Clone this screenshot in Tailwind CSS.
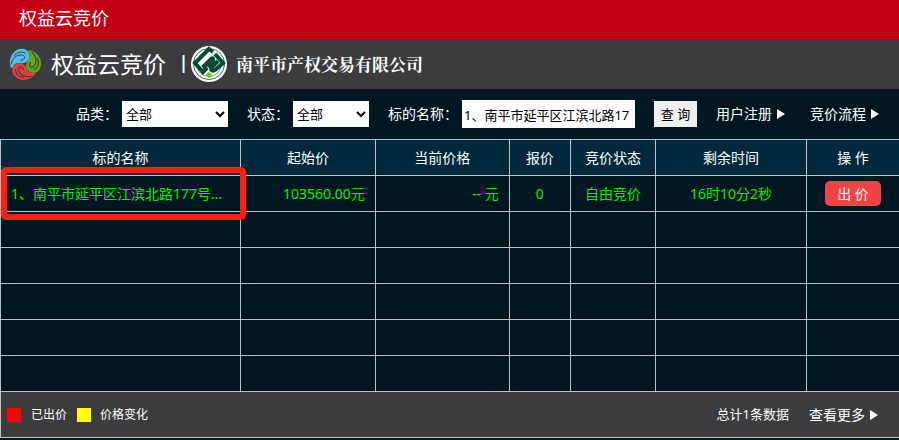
<!DOCTYPE html>
<html lang="zh-CN">
<head>
<meta charset="utf-8">
<meta name="viewport" content="width=device-width, initial-scale=1">
<title>权益云竞价</title>
<script src="https://cdn.jsdelivr.net/npm/@tailwindcss/browser@4"></script>
</head>
<body class="min-h-screen bg-[#001722] font-['Noto_Sans','Noto_Sans_CJK_SC',sans-serif] text-sm text-white">
<header>
  <div class="flex h-[39px] items-center bg-[#c40014] px-[19px] pb-[3px]">
    <h1 class="text-lg leading-6">权益云竞价</h1>
  </div>
  <div class="flex h-[50px] items-center bg-[#3c3c3e] px-[9px]">
    <svg class="size-8 shrink-0" viewBox="0 0 32 32" aria-hidden="true">
      <defs>
        <g id="petal">
          <path d="M2 20C-1 13 2 5 8 2C13-.5 18 1 20 5C22 10 19 14.500 15 15C11 16 7 14 5 17C4 19 4 20 2 20Z"/>
          <path d="M2 16C4 10 7 7 12 7C17 7 17 12 12 12M5 8C8 4 12 3 16 5" fill="none" stroke="#3c3c3e" stroke-width="1" stroke-linecap="round"/>
        </g>
      </defs>
      <use href="#petal" fill="#4fbdf0"/>
      <use href="#petal" fill="#62a51c" transform="rotate(120 16 16)"/>
      <use href="#petal" fill="#e63c40" transform="rotate(240 16 16)"/>
    </svg>
    <span class="ml-[10px] text-[23px] leading-8">权益云竞价</span>
    <span class="ml-4 h-[18px] w-[3px] border-x border-l-[#4aa5dc] border-r-[#c9a582] bg-white"></span>
    <svg class="ml-[6px] size-9 shrink-0" viewBox="0 0 36 36" aria-hidden="true">
      <circle cx="18" cy="18" r="18" fill="#fff"/>
      <circle cx="18" cy="18" r="15.500" fill="none" stroke="#41685a" stroke-width="1"/>
      <circle cx="18" cy="18" r="12.500" fill="none" stroke="#71877d" stroke-width="1"/>
      <path d="M18 1L34 17L22 28L13 29L2 18Z" fill="#fff"/>
      <path d="M22 6L18 3L4 17L12 26L15 23L13 20L20 13Q23 11 22 15L17 21" fill="none" stroke="#064b36" stroke-width="4"/>
      <path d="M24 8L32 17L24 24Q20 26 20 22L27 15" fill="none" stroke="#064b36" stroke-width="4"/>
      <path d="M18 27L20 29L18 31L16 29Z" fill="#83c31f" stroke="#83c31f" stroke-width="2"/>
    </svg>
    <span class="ml-[9px] font-['Noto_Serif_CJK_SC','Noto_Sans_CJK_SC',serif] text-[17px] leading-6 font-bold">南平市产权交易有限公司</span>
  </div>
</header>
<main>
  <form class="flex h-[50px] items-center justify-end gap-[19px] pr-5">
    <div class="flex items-center gap-1">
      <label for="category">品类：</label>
      <select id="category" class="h-[26px] w-[106px] bg-white text-[13px] text-black"><option>全部</option></select>
    </div>
    <div class="flex items-center gap-1">
      <label for="status">状态：</label>
      <select id="status" class="h-[26px] w-[76px] bg-white text-[13px] text-black"><option>全部</option></select>
    </div>
    <div class="flex items-center gap-1">
      <label for="name">标的名称：</label>
      <input id="name" type="text" value="1、南平市延平区江滨北路17" class="h-7 w-[173px] bg-white px-[2px] text-[13px] text-black">
    </div>
    <button type="button" class="h-[26px] w-[43px] bg-[#efefef] text-[13px] text-black">查 询</button>
    <a href="#" class="flex items-center gap-[5px]">用户注册
      <svg class="h-[10px] w-2" viewBox="0 0 8 10" aria-hidden="true"><path d="M0 0L8 5L0 10Z" fill="#fff"/></svg></a>
    <a href="#" class="ml-[6px] flex items-center gap-[5px]">竞价流程
      <svg class="h-[10px] w-2" viewBox="0 0 8 10" aria-hidden="true"><path d="M0 0L8 5L0 10Z" fill="#fff"/></svg></a>
  </form>
  <table class="w-full table-fixed border-separate border-spacing-0 text-center [&_td]:h-9 [&_td]:border-t [&_td]:border-l [&_td]:border-[#bfc3c5] [&_th]:h-9 [&_th]:border-t [&_th]:border-l [&_th]:border-[#bfc3c5] [&_th]:bg-[#00283c] [&_th]:font-normal">
    <colgroup>
      <col class="w-[26.7%]"><col class="w-[15%]"><col class="w-[14.9%]"><col class="w-[6.8%]"><col class="w-[9.45%]"><col class="w-[16.8%]"><col>
    </colgroup>
    <thead>
      <tr><th>标的名称</th><th>起始价</th><th>当前价格</th><th>报价</th><th>竞价状态</th><th>剩余时间</th><th>操 作</th></tr>
    </thead>
    <tbody>
      <tr class="text-[#00f000]">
        <td class="relative px-[10px] text-left whitespace-nowrap">1、南平市延平区江滨北路177号...
          <span class="pointer-events-none absolute -top-[9px] -right-[6px] -bottom-[9px] left-0 rounded-[5px] border-6 border-[#ff1f10]"></span>
        </td>
        <td class="pr-[10px] text-right">103560.00元</td>
        <td class="pr-[10px] text-right">-- 元</td>
        <td>0</td>
        <td>自由竞价</td>
        <td>16时10分2秒</td>
        <td><button type="button" class="mx-auto block h-[25px] w-14 rounded-[5px] bg-[#f04444] text-white">出 价</button></td>
      </tr>
      <tr><td></td><td></td><td></td><td></td><td></td><td></td><td></td></tr>
      <tr><td></td><td></td><td></td><td></td><td></td><td></td><td></td></tr>
      <tr><td></td><td></td><td></td><td></td><td></td><td></td><td></td></tr>
      <tr><td></td><td></td><td></td><td></td><td></td><td></td><td></td></tr>
      <tr><td></td><td></td><td></td><td></td><td></td><td></td><td></td></tr>
    </tbody>
  </table>
</main>
<footer class="flex h-[47px] items-center border-y border-l border-[#bfc3c5] bg-[#3c3c3e] pr-[21px] pl-[6px]">
  <span class="size-[14px] bg-[#ff0000]"></span>
  <span class="ml-[10px] text-xs">已出价</span>
  <span class="ml-[10px] size-[14px] bg-[#ffff00]"></span>
  <span class="ml-[9px] text-xs">价格变化</span>
  <span class="ml-auto text-[13px]">总计1条数据</span>
  <a href="#" class="ml-5 flex items-center gap-[5px]">查看更多
    <svg class="h-[10px] w-2" viewBox="0 0 8 10" aria-hidden="true"><path d="M0 0L8 5L0 10Z" fill="#fff"/></svg></a>
</footer>
</body>
</html>
